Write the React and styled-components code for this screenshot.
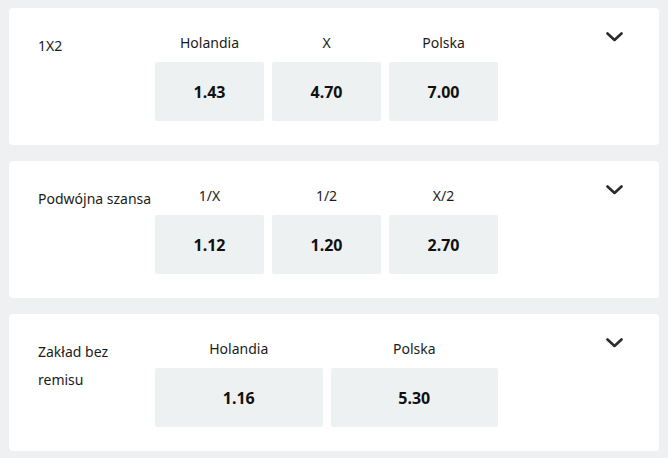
import React from 'react';
import styled, { createGlobalStyle } from 'styled-components';

const GlobalStyle = createGlobalStyle`
    html, body {
        margin: 0;
        padding: 0;
        background: #eef0f1;
        font-family: "Noto Sans", "Open Sans", sans-serif;
        color: #1b1b1b;
    }
`;

const Page = styled.div`
    display: flex;
    flex-direction: column;
    gap: 16px;
    padding: 8px 9px;
`;

const Card = styled.div`
    display: flex;
    align-items: flex-start;
    background: #fff;
    border-radius: 4px;
    padding: 24px 36px 24px 29px;
    height: 137px;
    box-sizing: border-box;
`;

const MarketName = styled.div`
    width: 117px;
    flex-shrink: 0;
    font-size: 14px;
    line-height: 28px;
`;

const Odds = styled.div`
    display: grid;
    grid-template-columns: repeat(${p => p.cols}, 1fr);
    column-gap: 8px;
    row-gap: 8px;
    width: 343px;
    flex-shrink: 0;
`;

const Outcome = styled.div`
    font-size: 14px;
    line-height: 22px;
    text-align: center;
`;

const OddButton = styled.button`
    height: 59px;
    border: none;
    border-radius: 2px;
    background: #eef1f2;
    font-family: inherit;
    font-size: 16px;
    font-weight: 700;
    color: #111;
    cursor: pointer;
    &:hover {
        background: #e3e7e9;
    }
`;

const Toggle = styled.div`
    flex: 1;
    display: flex;
    justify-content: flex-end;
    padding-top: 0px;
`;

const Chevron = () => (
    <svg width="17" height="10" viewBox="0 0 17 10" fill="none">
        <path d="M1.5 1.5 L8.5 8 L15.5 1.5" stroke="#2b2b2b" strokeWidth="2.6" strokeLinecap="round" strokeLinejoin="round" />
    </svg>
);

const markets = [
    { name: '1X2', outcomes: [['Holandia', '1.43'], ['X', '4.70'], ['Polska', '7.00']] },
    { name: 'Podwójna szansa', outcomes: [['1/X', '1.12'], ['1/2', '1.20'], ['X/2', '2.70']] },
    { name: 'Zakład bez remisu', outcomes: [['Holandia', '1.16'], ['Polska', '5.30']] },
];

export default function App() {
    return (
        <>
            <GlobalStyle />
            <Page>
                {markets.map(m => (
                    <Card key={m.name}>
                        <MarketName>{m.name}</MarketName>
                        <Odds cols={m.outcomes.length}>
                            {m.outcomes.map(([label]) => <Outcome key={label}>{label}</Outcome>)}
                            {m.outcomes.map(([label, odd]) => <OddButton key={label}>{odd}</OddButton>)}
                        </Odds>
                        <Toggle><Chevron /></Toggle>
                    </Card>
                ))}
            </Page>
        </>
    );
}
